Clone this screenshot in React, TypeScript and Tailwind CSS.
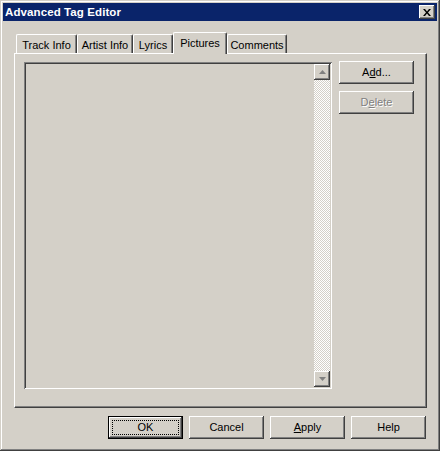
import React from "react";

const raised =
  "shadow-[inset_-1px_-1px_#404040,inset_1px_1px_#ffffff,inset_-2px_-2px_#808080,inset_2px_2px_#d4d0c8]";

function Btn({
  children,
  className = "",
  disabled = false,
  def = false,
}: {
  children: React.ReactNode;
  className?: string;
  disabled?: boolean;
  def?: boolean;
}) {
  if (def) {
    return (
      <div className={`w-[75px] h-[23px] border border-black bg-[#d4d0c8] ${className}`}>
        <div className={`w-full h-full flex items-center justify-center ${raised} p-[3px]`}>
          <div className="w-full h-full border border-dotted border-black flex items-center justify-center">
            {children}
          </div>
        </div>
      </div>
    );
  }
  return (
    <div
      className={`w-[75px] h-[23px] bg-[#d4d0c8] flex items-center justify-center ${raised} ${
        disabled ? "text-[#808080] [text-shadow:1px_1px_#ffffff]" : "text-black"
      } ${className}`}
    >
      {children}
    </div>
  );
}

function Tab({ label, w, selected = false }: { label: string; w: string; selected?: boolean }) {
  if (selected) {
    return (
      <div
        className={`${w} h-[22px] -mb-px relative z-10 bg-[#d4d0c8] border-t border-l border-white shadow-[inset_-1px_0_#808080] border-r border-r-[#404040] rounded-t-[2px] flex justify-center pt-[4px]`}
      >
        {label}
      </div>
    );
  }
  return (
    <div
      className={`${w} h-[19px] bg-[#d4d0c8] border-t border-l border-white border-r border-r-[#404040] shadow-[inset_-1px_0_#808080] rounded-t-[2px] flex justify-center pt-[4px]`}
    >
      {label}
    </div>
  );
}

function Arrow({ up }: { up: boolean }) {
  return (
    <div className={`w-[16px] h-[16px] bg-[#d4d0c8] ${raised} flex items-center justify-center`}>
      <svg width="7" height="4" viewBox="0 0 7 4">
        {up ? (
          <polygon points="3.5,0 7,4 0,4" fill="#808080" />
        ) : (
          <polygon points="0,0 7,0 3.5,4" fill="#808080" />
        )}
      </svg>
    </div>
  );
}

export default function App() {
  return (
    <div
      className="w-[440px] h-[451px] bg-[#d4d0c8] text-[11px] leading-[13px] text-black shadow-[inset_-1px_-1px_#404040,inset_1px_1px_#d4d0c8,inset_-2px_-2px_#808080,inset_2px_2px_#ffffff] p-[3px] flex flex-col"
      style={{ fontFamily: '"Liberation Sans", Arial, sans-serif' }}
    >
      {/* Title bar */}
      <div className="h-[18px] bg-[#0a246a] flex items-center justify-between pl-[2px] pr-[2px]">
        <span className="text-white font-bold text-[11.5px] tracking-[0.1px]">Advanced Tag Editor</span>
        <div className={`w-[16px] h-[14px] bg-[#d4d0c8] ${raised} flex items-center justify-center`}>
          <svg width="8" height="7" viewBox="0 0 8 7">
            <path d="M0 0h2l2 2.5 2-2.5h2l-3 3.5 3 3.5h-2l-2-2.5-2 2.5h-2l3-3.5z" fill="#000" />
          </svg>
        </div>
      </div>

      {/* Content */}
      <div className="flex flex-col pl-[11px] pr-[10px] pt-[11px]">
        {/* Tabs */}
        <div className="flex items-end h-[21px] pl-[2px]">
          <Tab label="Track Info" w="w-[61px]" />
          <Tab label="Artist Info" w="w-[56px]" />
          <Tab label="Lyrics" w="w-[40px]" />
          <Tab label="Pictures" w="w-[54px]" selected />
          <Tab label="Comments" w="w-[60px]" />
        </div>

        {/* Panel */}
        <div className="w-[413px] h-[355px] border-t border-l border-white border-r border-b border-r-[#404040] border-b-[#404040] shadow-[inset_-1px_-1px_#808080] flex pl-[9px] pt-[8px]">
          {/* List box */}
          <div className="w-[308px] h-[327px] shadow-[inset_1px_1px_#808080,inset_-1px_-1px_#ffffff,inset_2px_2px_#404040,inset_-2px_-2px_#d4d0c8] p-[2px] flex justify-end">
            <div className="w-[16px] h-full flex flex-col">
              <Arrow up />
              <div className="flex-1 bg-[image:repeating-conic-gradient(#ffffff_0_25%,#d4d0c8_0_50%)] bg-[size:2px_2px]" />
              <Arrow up={false} />
            </div>
          </div>

          {/* Side buttons */}
          <div className="flex flex-col gap-[7px] ml-[7px] -mt-px">
            <Btn>
              <span>
                A<span className="underline">d</span>d...
              </span>
            </Btn>
            <Btn disabled>
              <span>
                D<span className="underline">e</span>lete
              </span>
            </Btn>
          </div>
        </div>

        {/* Bottom buttons */}
        <div className="flex justify-end gap-[6px] mt-[8px] pr-px">
          <Btn def>OK</Btn>
          <Btn>Cancel</Btn>
          <Btn>
            <span>
              <span className="underline">A</span>pply
            </span>
          </Btn>
          <Btn>Help</Btn>
        </div>
      </div>
    </div>
  );
}
